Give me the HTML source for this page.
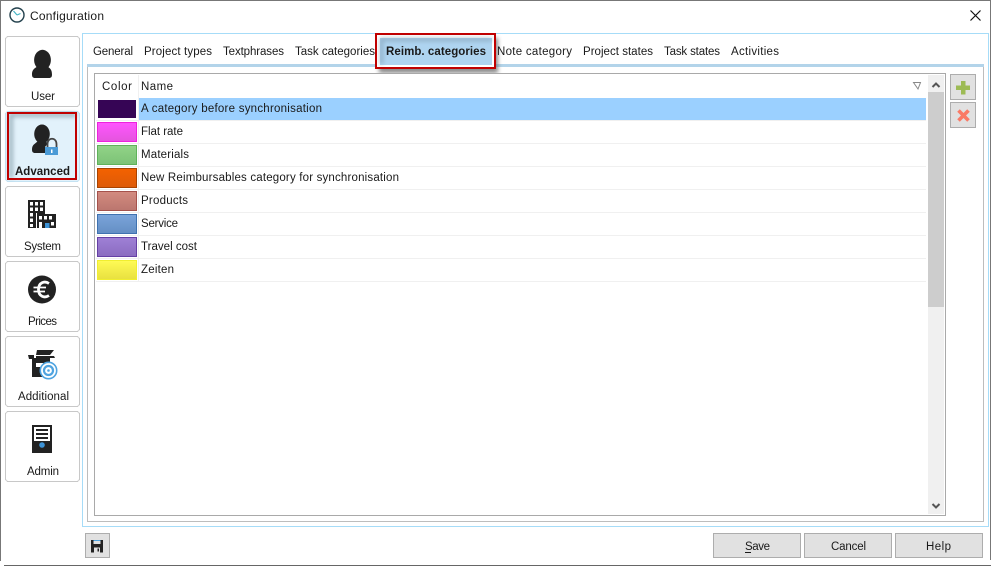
<!DOCTYPE html>
<html><head><meta charset="utf-8"><title>Configuration</title>
<style>
html,body{margin:0;padding:0;background:#fff;width:991px;height:566px;overflow:hidden}
svg{display:block;position:absolute;left:0;top:0}
text{font-family:"Liberation Sans",sans-serif;font-size:11.5px;fill:#1a1a1a}
</style></head><body>
<svg width="991" height="566" viewBox="0 0 991 566" shape-rendering="crispEdges">
<defs>
<linearGradient id="g1" x1="0" y1="0" x2="0" y2="1"><stop offset="0" stop-color="#ff55ff"/><stop offset="1" stop-color="#e455dd"/></linearGradient>
<linearGradient id="g2" x1="0" y1="0" x2="0" y2="1"><stop offset="0" stop-color="#92d488"/><stop offset="1" stop-color="#7cc276"/></linearGradient>
<linearGradient id="g3" x1="0" y1="0" x2="0" y2="1"><stop offset="0" stop-color="#f46200"/><stop offset="1" stop-color="#dd5a08"/></linearGradient>
<linearGradient id="g4" x1="0" y1="0" x2="0" y2="1"><stop offset="0" stop-color="#d38b80"/><stop offset="1" stop-color="#bb766e"/></linearGradient>
<linearGradient id="g5" x1="0" y1="0" x2="0" y2="1"><stop offset="0" stop-color="#7ba4da"/><stop offset="1" stop-color="#648fc4"/></linearGradient>
<linearGradient id="g6" x1="0" y1="0" x2="0" y2="1"><stop offset="0" stop-color="#9f80d6"/><stop offset="1" stop-color="#8a6cc0"/></linearGradient>
<linearGradient id="g7" x1="0" y1="0" x2="0" y2="1"><stop offset="0" stop-color="#fffb55"/><stop offset="1" stop-color="#e8e040"/></linearGradient>
<filter id="sh" x="-20%" y="-30%" width="140%" height="160%"><feGaussianBlur stdDeviation="2"/></filter>
</defs>

<!-- window frame -->
<rect x="0" y="0" width="991" height="1" fill="#777"/>
<rect x="0" y="0" width="1" height="561" fill="#777"/>
<rect x="990" y="0" width="1" height="560" fill="#777"/>
<rect x="4" y="565" width="987" height="1" fill="#666"/>

<!-- title -->
<g shape-rendering="geometricPrecision">
<circle cx="17" cy="15" r="7" fill="#fff" stroke="#22404c" stroke-width="1.4"/>
<path d="M17 15 L13.5 11 M17 15 L20.5 13.5" stroke="#45b5c5" stroke-width="1.2" fill="none"/>
<text x="30" y="20" textLength="74" lengthAdjust="spacing" style="font-size:12px">Configuration</text>
<path d="M970.5 10.5 L980.5 20.5 M980.5 10.5 L970.5 20.5" stroke="#111" stroke-width="1.2" fill="none"/>
</g>

<!-- tab frame -->
<rect x="82.5" y="33.5" width="906" height="493" fill="#fff" stroke="#a6dcf8"/>
<rect x="87.5" y="66.5" width="896" height="455" fill="#fff" stroke="#bdbdbd"/>
<rect x="87" y="64" width="897" height="3" fill="#b3d4ea"/>

<!-- selected tab -->
<rect x="379" y="38" width="119" height="35" fill="#666" opacity=".75" filter="url(#sh)"/>
<rect x="376" y="35" width="119" height="33" fill="#fff"/>
<rect x="380" y="38" width="112" height="27" fill="#aed4f0"/>
<path d="M381.5 64 V39.5 H492" fill="none" stroke="#7f99ad" stroke-width="3" opacity=".7" filter="url(#sh)"/>
<rect x="376" y="34" width="119" height="34" fill="none" stroke="#c00000" stroke-width="2"/>

<!-- tab labels -->
<g shape-rendering="geometricPrecision">
<text x="93" y="55" textLength="40" lengthAdjust="spacing">General</text>
<text x="144" y="55" textLength="68" lengthAdjust="spacing">Project types</text>
<text x="223" y="55" textLength="61" lengthAdjust="spacing">Textphrases</text>
<text x="295" y="55" textLength="80" lengthAdjust="spacing">Task categories</text>
<text x="386" y="55" textLength="100" lengthAdjust="spacing" font-weight="bold">Reimb. categories</text>
<text x="497" y="55" textLength="75" lengthAdjust="spacing">Note category</text>
<text x="583" y="55" textLength="70" lengthAdjust="spacing">Project states</text>
<text x="664" y="55" textLength="56" lengthAdjust="spacing">Task states</text>
<text x="731" y="55" textLength="48" lengthAdjust="spacing">Activities</text>
</g>

<!-- grid -->
<rect x="94.5" y="73.5" width="851" height="442" fill="#fff" stroke="#a9a9a9"/>
<rect x="138" y="75" width="1" height="207" fill="#f0f0f0"/>
<rect x="96" y="120" width="830" height="1" fill="#f0f0f0"/>
<rect x="96" y="143" width="830" height="1" fill="#f0f0f0"/>
<rect x="96" y="166" width="830" height="1" fill="#f0f0f0"/>
<rect x="96" y="189" width="830" height="1" fill="#f0f0f0"/>
<rect x="96" y="212" width="830" height="1" fill="#f0f0f0"/>
<rect x="96" y="235" width="830" height="1" fill="#f0f0f0"/>
<rect x="96" y="258" width="830" height="1" fill="#f0f0f0"/>
<rect x="96" y="281" width="830" height="1" fill="#f0f0f0"/>
<rect x="139" y="98" width="787" height="22" fill="#9bd0ff"/>

<!-- swatches -->
<rect x="98" y="100" width="38" height="18" fill="#360555"/>
<rect x="97.5" y="122.5" width="39" height="19" fill="url(#g1)" stroke="#ee22dd"/>
<rect x="97.5" y="145.5" width="39" height="19" fill="url(#g2)" stroke="#5fb25a"/>
<rect x="97.5" y="168.5" width="39" height="19" fill="url(#g3)" stroke="#a84300"/>
<rect x="97.5" y="191.5" width="39" height="19" fill="url(#g4)" stroke="#a5524c"/>
<rect x="97.5" y="214.5" width="39" height="19" fill="url(#g5)" stroke="#3f72b0"/>
<rect x="97.5" y="237.5" width="39" height="19" fill="url(#g6)" stroke="#6540a5"/>
<rect x="97.5" y="260.5" width="39" height="19" fill="url(#g7)" stroke="#f0ee30"/>

<!-- grid text -->
<g shape-rendering="geometricPrecision">
<text x="102" y="90" textLength="30" lengthAdjust="spacing">Color</text>
<text x="141" y="90" textLength="32" lengthAdjust="spacing">Name</text>
<path d="M913.5 82.5 H920.5 L918 89 Z" fill="none" stroke="#888" stroke-width="1"/>
<text x="141" y="112" textLength="181" lengthAdjust="spacing">A category before synchronisation</text>
<text x="141" y="135" textLength="42" lengthAdjust="spacing">Flat rate</text>
<text x="141" y="158" textLength="48" lengthAdjust="spacing">Materials</text>
<text x="141" y="181" textLength="258" lengthAdjust="spacing">New Reimbursables category for synchronisation</text>
<text x="141" y="204" textLength="47" lengthAdjust="spacing">Products</text>
<text x="141" y="227" textLength="37" lengthAdjust="spacing">Service</text>
<text x="141" y="250" textLength="56" lengthAdjust="spacing">Travel cost</text>
<text x="141" y="273" textLength="33" lengthAdjust="spacing">Zeiten</text>
</g>

<!-- scrollbar -->
<rect x="928" y="75" width="16" height="439" fill="#f0f0f0"/>
<rect x="928" y="92" width="16" height="215" fill="#cdcdcd"/>
<g shape-rendering="geometricPrecision">
<path d="M932.5 87 L936 83.5 L939.5 87" fill="none" stroke="#555" stroke-width="2"/>
<path d="M932.5 504 L936 507.5 L939.5 504" fill="none" stroke="#555" stroke-width="2"/>
</g>

<!-- add / delete -->
<rect x="950.5" y="74.5" width="25" height="25" fill="#e1e1e1" stroke="#adadad"/>
<rect x="950.5" y="102.5" width="25" height="25" fill="#e1e1e1" stroke="#adadad"/>
<path d="M961 81 h4.5 v4.5 h4.5 v4.5 h-4.5 v4.5 h-4.5 v-4.5 h-5 v-4.5 h5 z" fill="#9dbb55"/>
<g shape-rendering="geometricPrecision"><path d="M958.5 110.5 L968.5 120.5 M968.5 110.5 L958.5 120.5" stroke="#fa7a66" stroke-width="3.6" fill="none"/></g>

<!-- sidebar buttons -->
<rect x="5.5" y="36.5" width="74" height="70" rx="3" fill="#fff" stroke="#c8c8c8"/>
<rect x="5.5" y="111.5" width="74" height="70" rx="3" fill="#e2f2fb" stroke="#c4e2f2"/>
<rect x="5.5" y="186.5" width="74" height="70" rx="3" fill="#fff" stroke="#c8c8c8"/>
<rect x="5.5" y="261.5" width="74" height="70" rx="3" fill="#fff" stroke="#c8c8c8"/>
<rect x="5.5" y="336.5" width="74" height="70" rx="3" fill="#fff" stroke="#c8c8c8"/>
<rect x="5.5" y="411.5" width="74" height="70" rx="3" fill="#fff" stroke="#c8c8c8"/>

<!-- advanced highlight -->
<path d="M11 178 V115 H76" fill="none" stroke="#7f97a5" stroke-width="4" opacity=".7" filter="url(#sh)"/>
<rect x="8" y="113" width="68" height="66" fill="none" stroke="#c00000" stroke-width="2"/>

<g shape-rendering="geometricPrecision">
<!-- user -->
<ellipse cx="42.5" cy="60" rx="8.4" ry="10.2" fill="#222"/>
<path d="M32 74.5 C32 68.5 36 68 39 65 H46 C49 68 52 68.5 52 74.5 C52 77 51 78 49 78 H35 C33 78 32 77 32 74.5 Z" fill="#222"/>
<text x="31" y="100" textLength="24" lengthAdjust="spacing">User</text>

<!-- advanced -->
<ellipse cx="42" cy="134" rx="7.8" ry="9.5" fill="#222"/>
<path d="M32 149.5 C32 144.5 35 144 38 141 H46 L47.5 144 L45 147 V153 H35 C33 153 32 152 32 149.5 Z" fill="#222"/>
<path d="M47.5 147 V144 C47.5 137 56.5 137 56.5 144 V147" fill="none" stroke="#444" stroke-width="1.8"/>
<rect x="45" y="147" width="13" height="8" fill="#4b9bd6"/>
<rect x="51" y="149.5" width="1.5" height="3.5" fill="#fff"/>
<text x="15" y="175" textLength="55" lengthAdjust="spacing" font-weight="bold" fill="#000">Advanced</text>

<!-- system -->
<rect x="28" y="200" width="17" height="28" fill="#222"/>
<rect x="37" y="214" width="19" height="14" fill="#222"/>
<g fill="#fff">
<rect x="30" y="202" width="3" height="3.5"/><rect x="35" y="202" width="3" height="3.5"/><rect x="40" y="202" width="3" height="3.5"/>
<rect x="30" y="207.5" width="3" height="3.5"/><rect x="35" y="207.5" width="3" height="3.5"/><rect x="40" y="207.5" width="3" height="3.5"/>
<rect x="30" y="213" width="3" height="3.5"/>
<rect x="30" y="218.5" width="3" height="3.5"/><rect x="30" y="224" width="3" height="3"/>
<rect x="39" y="216" width="3" height="3.5"/><rect x="44" y="216" width="3" height="3.5"/><rect x="49" y="216" width="3" height="3.5"/>
<rect x="39" y="222" width="3" height="6"/><rect x="51" y="222" width="3" height="3.5"/>
<rect x="36" y="213" width="1" height="15"/>
</g>
<rect x="45" y="223" width="4.5" height="5" fill="#3d93d6"/>
<text x="24" y="250" textLength="37" lengthAdjust="spacing">System</text>

<!-- prices -->
<circle cx="42" cy="289.5" r="14" fill="#222"/>
<path d="M49 283.5 C44.5 280.5 38.5 282.5 38.5 289.5 C38.5 296.5 44.5 298.5 49 295.5" fill="none" stroke="#fff" stroke-width="2.8"/>
<path d="M33.5 287.5 H46 M33.5 291.5 H45" stroke="#fff" stroke-width="1.8" fill="none"/>
<text x="28" y="325" textLength="29" lengthAdjust="spacing">Prices</text>

<!-- additional -->
<path d="M32 358 H50 V377 H32 Z" fill="#222"/>
<rect x="36" y="363" width="7" height="4" fill="#fff"/>
<path d="M28 355 H34 V359 H29 Z M37 350 H54 L50 355 H36 Z M36 356 H54 L55 358 H36 Z" fill="#222"/>
<circle cx="48.5" cy="370.5" r="8.2" fill="#fff" stroke="#4ea3e0" stroke-width="1.6"/>
<circle cx="48.5" cy="370.5" r="4.5" fill="none" stroke="#4ea3e0" stroke-width="2.2"/>
<circle cx="48.5" cy="370.5" r="1.3" fill="#4ea3e0"/>
<text x="18" y="400" textLength="51" lengthAdjust="spacing">Additional</text>

<!-- admin -->
<rect x="32" y="425" width="20" height="28" fill="#222"/>
<rect x="34" y="427" width="16" height="24" fill="#fff"/>
<rect x="36" y="429" width="12" height="2" fill="#222"/>
<rect x="36" y="433" width="12" height="2" fill="#222"/>
<rect x="36" y="437" width="12" height="2" fill="#222"/>
<path d="M34 441 H50 V451 H34 Z" fill="#222"/>
<circle cx="42" cy="445" r="2.8" fill="#3d93d6"/>
<text x="27" y="475" textLength="32" lengthAdjust="spacing">Admin</text>
</g>

<!-- save icon button -->
<rect x="85.5" y="533.5" width="24" height="24" fill="#e1e1e1" stroke="#adadad"/>
<rect x="91" y="540" width="12" height="12.5" fill="#222"/>
<rect x="93.5" y="540" width="7" height="1" fill="#4ea3e0"/>
<rect x="93.5" y="541" width="7" height="3" fill="#e1e1e1"/>
<rect x="94" y="547.5" width="6" height="5" fill="#e1e1e1"/>
<rect x="97.5" y="548.5" width="1.5" height="3" fill="#222"/>

<!-- bottom buttons -->
<rect x="713.5" y="533.5" width="87" height="24" fill="#e1e1e1" stroke="#adadad"/>
<rect x="804.5" y="533.5" width="87" height="24" fill="#e1e1e1" stroke="#adadad"/>
<rect x="895.5" y="533.5" width="87" height="24" fill="#e1e1e1" stroke="#adadad"/>
<g shape-rendering="geometricPrecision">
<text x="745" y="550" textLength="25" lengthAdjust="spacing">Save</text>
<rect x="745" y="552" width="6" height="1" fill="#1a1a1a"/>
<text x="831" y="550" textLength="35" lengthAdjust="spacing">Cancel</text>
<text x="926" y="550" textLength="25" lengthAdjust="spacing">Help</text>
</g>
</svg>
</body></html>
